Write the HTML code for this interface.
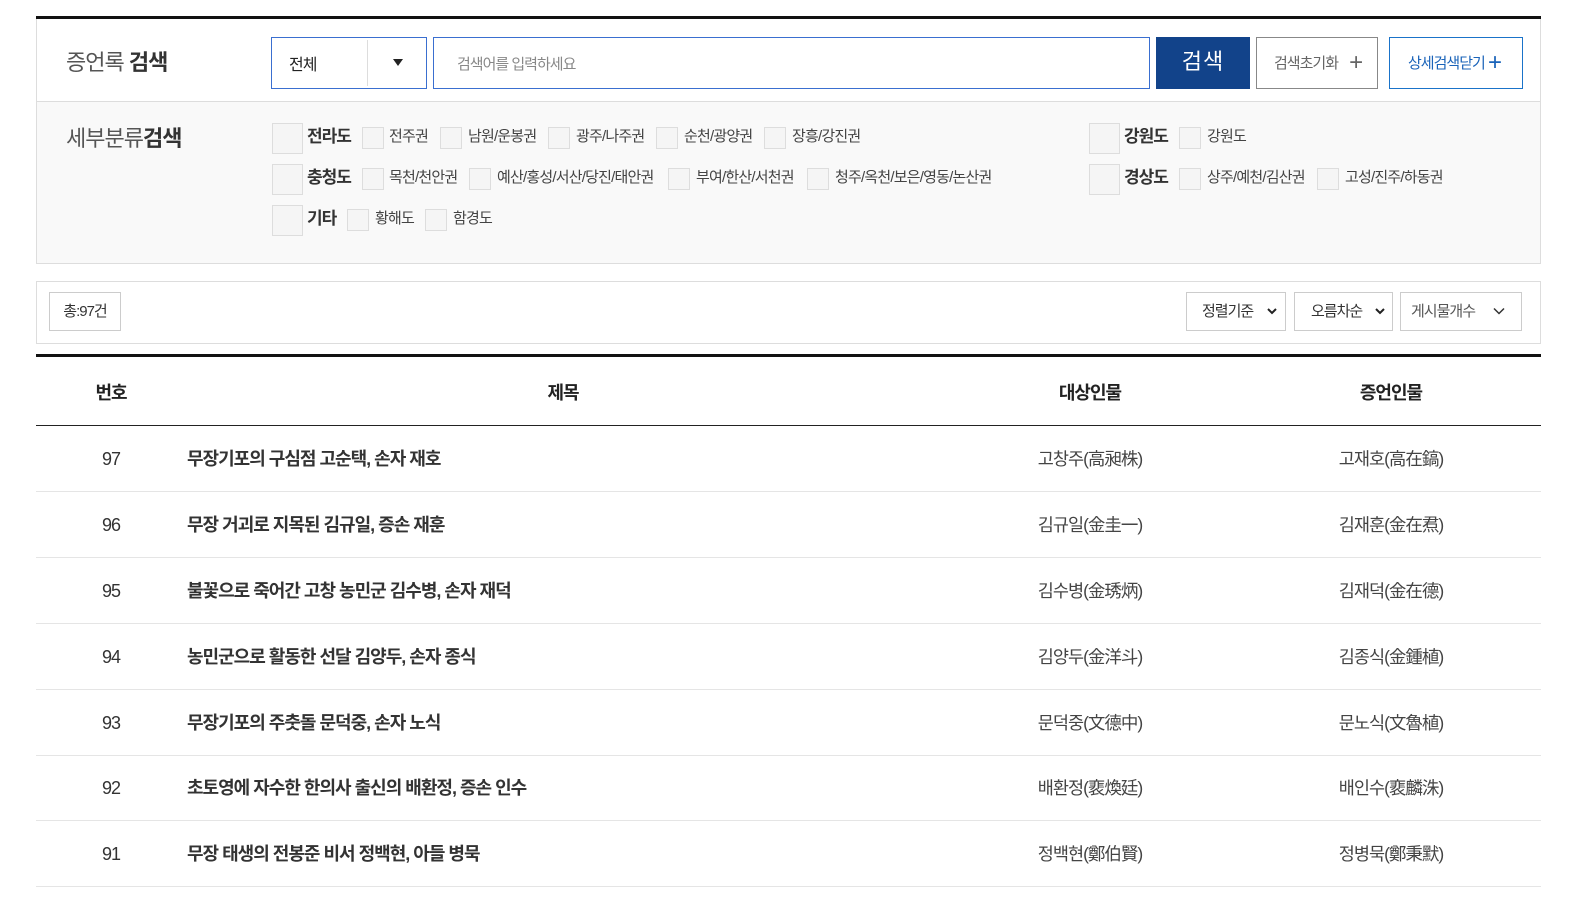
<!DOCTYPE html>
<html><head><meta charset="utf-8"><style>
*{margin:0;padding:0;box-sizing:border-box}
body{width:1582px;height:907px;background:#fff;position:relative;overflow:hidden;font-family:"Liberation Sans","Noto Sans CJK KR",sans-serif;color:#333;letter-spacing:-1px}
.a{position:absolute;white-space:nowrap}
.cb{position:absolute;background:#f5f5f5;border:1px solid #ddd}
.big{width:31px;height:31px}
.sm{width:22px;height:22px}
.lb{position:absolute;font-size:15px;color:#444;line-height:20px;white-space:nowrap;letter-spacing:-0.8px}
.bl{position:absolute;font-size:17px;font-weight:bold;color:#333;line-height:20px}
.row{position:absolute;left:36px;width:1505px;height:66px;border-bottom:1px solid #e5e5e5;font-size:18px}
.row span{position:absolute;top:21px;line-height:24px;white-space:nowrap}
.n{left:0;width:150px;text-align:center;color:#333}
.t{left:151px;font-weight:bold;color:#333}
.p1{left:954px;width:200px;text-align:center;color:#444;font-size:17.5px}
.p2{left:1255px;width:200px;text-align:center;color:#444;font-size:17.5px}
.sel{position:absolute;top:292px;height:39px;border:1px solid #ccc;background:#fff;font-size:15px;line-height:37px;color:#333}
.sel svg{position:absolute;top:14px}
</style></head><body>
<div class="a" style="left:36px;top:16px;width:1505px;height:3px;background:#111"></div>
<div class="a" style="left:36px;top:19px;width:1505px;height:245px;border:1px solid #ddd;border-top:none"></div>
<div class="a" style="left:37px;top:101px;width:1503px;height:162px;background:#f9f9f9;border-top:1px solid #ddd"></div>
<div class="a" style="left:66px;top:48px;font-size:22px;color:#555;line-height:30px">증언록 <b style="color:#333">검색</b></div>
<div class="a" style="left:271px;top:37px;width:156px;height:52px;border:1px solid #3a6fd0;background:#fff"></div>
<div class="a" style="left:289px;top:51px;font-size:16px;color:#222">전체</div>
<div class="a" style="left:367px;top:40px;width:1px;height:46px;background:#ddd"></div>
<div class="a" style="left:393px;top:59px;width:0;height:0;border-left:5px solid transparent;border-right:5px solid transparent;border-top:7px solid #222"></div>
<div class="a" style="left:433px;top:37px;width:717px;height:52px;border:1px solid #3a6fd0;background:#fff"></div>
<div class="a" style="left:457px;top:53px;font-size:15px;color:#888">검색어를 입력하세요</div>
<div class="a" style="left:1156px;top:37px;width:94px;height:52px;background:#12438a;color:#fff;font-size:22px;text-align:center;line-height:50px;letter-spacing:1px">검색</div>
<div class="a" style="left:1256px;top:37px;width:122px;height:52px;border:1px solid #888;background:#fff;color:#666;font-size:15px;line-height:50px;padding-left:17px">검색초기화 <span style="font-size:24px;font-weight:300;margin-left:8px;vertical-align:-2px">+</span></div>
<div class="a" style="left:1389px;top:37px;width:134px;height:52px;border:1px solid #1a73c9;background:#fff;color:#1a63b9;font-size:15px;line-height:50px;padding-left:18px">상세검색닫기 <span style="font-size:24px;font-weight:300;vertical-align:-2px">+</span></div>

<div class="a" style="left:66px;top:124px;font-size:22px;color:#555;line-height:30px">세부분류<b style="color:#333">검색</b></div>

<div class="cb big" style="left:272px;top:123px"></div><div class="bl" style="left:307px;top:127px">전라도</div>
<div class="cb sm" style="left:362px;top:127px"></div><div class="lb" style="left:389px;top:127px">전주권</div>
<div class="cb sm" style="left:440px;top:127px"></div><div class="lb" style="left:468px;top:127px">남원/운봉권</div>
<div class="cb sm" style="left:548px;top:127px"></div><div class="lb" style="left:576px;top:127px">광주/나주권</div>
<div class="cb sm" style="left:656px;top:127px"></div><div class="lb" style="left:684px;top:127px">순천/광양권</div>
<div class="cb sm" style="left:764px;top:127px"></div><div class="lb" style="left:792px;top:127px">장흥/강진권</div>
<div class="cb big" style="left:1089px;top:123px"></div><div class="bl" style="left:1124px;top:127px">강원도</div>
<div class="cb sm" style="left:1179px;top:127px"></div><div class="lb" style="left:1207px;top:127px">강원도</div>

<div class="cb big" style="left:272px;top:164px"></div><div class="bl" style="left:307px;top:168px">충청도</div>
<div class="cb sm" style="left:362px;top:168px"></div><div class="lb" style="left:389px;top:168px">목천/천안권</div>
<div class="cb sm" style="left:469px;top:168px"></div><div class="lb" style="left:497px;top:168px">예산/홍성/서산/당진/태안권</div>
<div class="cb sm" style="left:668px;top:168px"></div><div class="lb" style="left:696px;top:168px">부여/한산/서천권</div>
<div class="cb sm" style="left:807px;top:168px"></div><div class="lb" style="left:835px;top:168px">청주/옥천/보은/영동/논산권</div>
<div class="cb big" style="left:1089px;top:164px"></div><div class="bl" style="left:1124px;top:168px">경상도</div>
<div class="cb sm" style="left:1179px;top:168px"></div><div class="lb" style="left:1207px;top:168px">상주/예천/김산권</div>
<div class="cb sm" style="left:1317px;top:168px"></div><div class="lb" style="left:1345px;top:168px">고성/진주/하동권</div>

<div class="cb big" style="left:272px;top:205px"></div><div class="bl" style="left:307px;top:209px">기타</div>
<div class="cb sm" style="left:347px;top:209px"></div><div class="lb" style="left:375px;top:209px">황해도</div>
<div class="cb sm" style="left:425px;top:209px"></div><div class="lb" style="left:453px;top:209px">함경도</div>

<div class="a" style="left:36px;top:281px;width:1505px;height:63px;border:1px solid #ddd"></div>
<div class="a" style="left:49px;top:292px;width:72px;height:39px;border:1px solid #ccc;font-size:15px;line-height:37px;text-align:center;color:#333">총:97건</div>
<div class="sel" style="left:1186px;width:100px;padding-left:15px">정렬기준<svg style="left:80px" width="10" height="8" viewBox="0 0 10 8"><path d="M1 2 L5 6 L9 2" stroke="#222" stroke-width="2" fill="none"/></svg></div>
<div class="sel" style="left:1294px;width:99px;padding-left:16px">오름차순<svg style="left:80px" width="10" height="8" viewBox="0 0 10 8"><path d="M1 2 L5 6 L9 2" stroke="#222" stroke-width="2" fill="none"/></svg></div>
<div class="sel" style="left:1400px;width:122px;padding-left:10px;color:#555">게시물개수<svg style="left:92px" width="12" height="8" viewBox="0 0 12 8"><path d="M1 1.5 L6 6.5 L11 1.5" stroke="#333" stroke-width="1.5" fill="none"/></svg></div>

<div class="a" style="left:36px;top:354px;width:1505px;height:3px;background:#111"></div>
<div class="a" style="left:36px;top:357px;width:1505px;height:69px;border-bottom:1px solid #222;font-size:18px;font-weight:bold;color:#222">
<span class="a" style="left:0;width:150px;text-align:center;top:22px">번호</span>
<span class="a" style="left:427px;width:200px;text-align:center;top:22px">제목</span>
<span class="a" style="left:954px;width:200px;text-align:center;top:22px">대상인물</span>
<span class="a" style="left:1255px;width:200px;text-align:center;top:22px">증언인물</span>
</div>
<div class="row" style="top:426px"><span class="n">97</span><span class="t">무장기포의 구심점 고순택, 손자 재호</span><span class="p1">고창주(高昶株)</span><span class="p2">고재호(高在鎬)</span></div>
<div class="row" style="top:492px"><span class="n">96</span><span class="t">무장 거괴로 지목된 김규일, 증손 재훈</span><span class="p1">김규일(金圭一)</span><span class="p2">김재훈(金在焄)</span></div>
<div class="row" style="top:558px"><span class="n">95</span><span class="t">불꽃으로 죽어간 고창 농민군 김수병, 손자 재덕</span><span class="p1">김수병(金琇炳)</span><span class="p2">김재덕(金在德)</span></div>
<div class="row" style="top:624px"><span class="n">94</span><span class="t">농민군으로 활동한 선달 김양두, 손자 종식</span><span class="p1">김양두(金洋斗)</span><span class="p2">김종식(金鍾植)</span></div>
<div class="row" style="top:690px"><span class="n">93</span><span class="t">무장기포의 주춧돌 문덕중, 손자 노식</span><span class="p1">문덕중(文德中)</span><span class="p2">문노식(文魯植)</span></div>
<div class="row" style="top:755px"><span class="n">92</span><span class="t">초토영에 자수한 한의사 출신의 배환정, 증손 인수</span><span class="p1">배환정(裵煥廷)</span><span class="p2">배인수(裵麟洙)</span></div>
<div class="row" style="top:821px"><span class="n">91</span><span class="t">무장 태생의 전봉준 비서 정백현, 아들 병묵</span><span class="p1">정백현(鄭伯賢)</span><span class="p2">정병묵(鄭秉默)</span></div>
</body></html>
